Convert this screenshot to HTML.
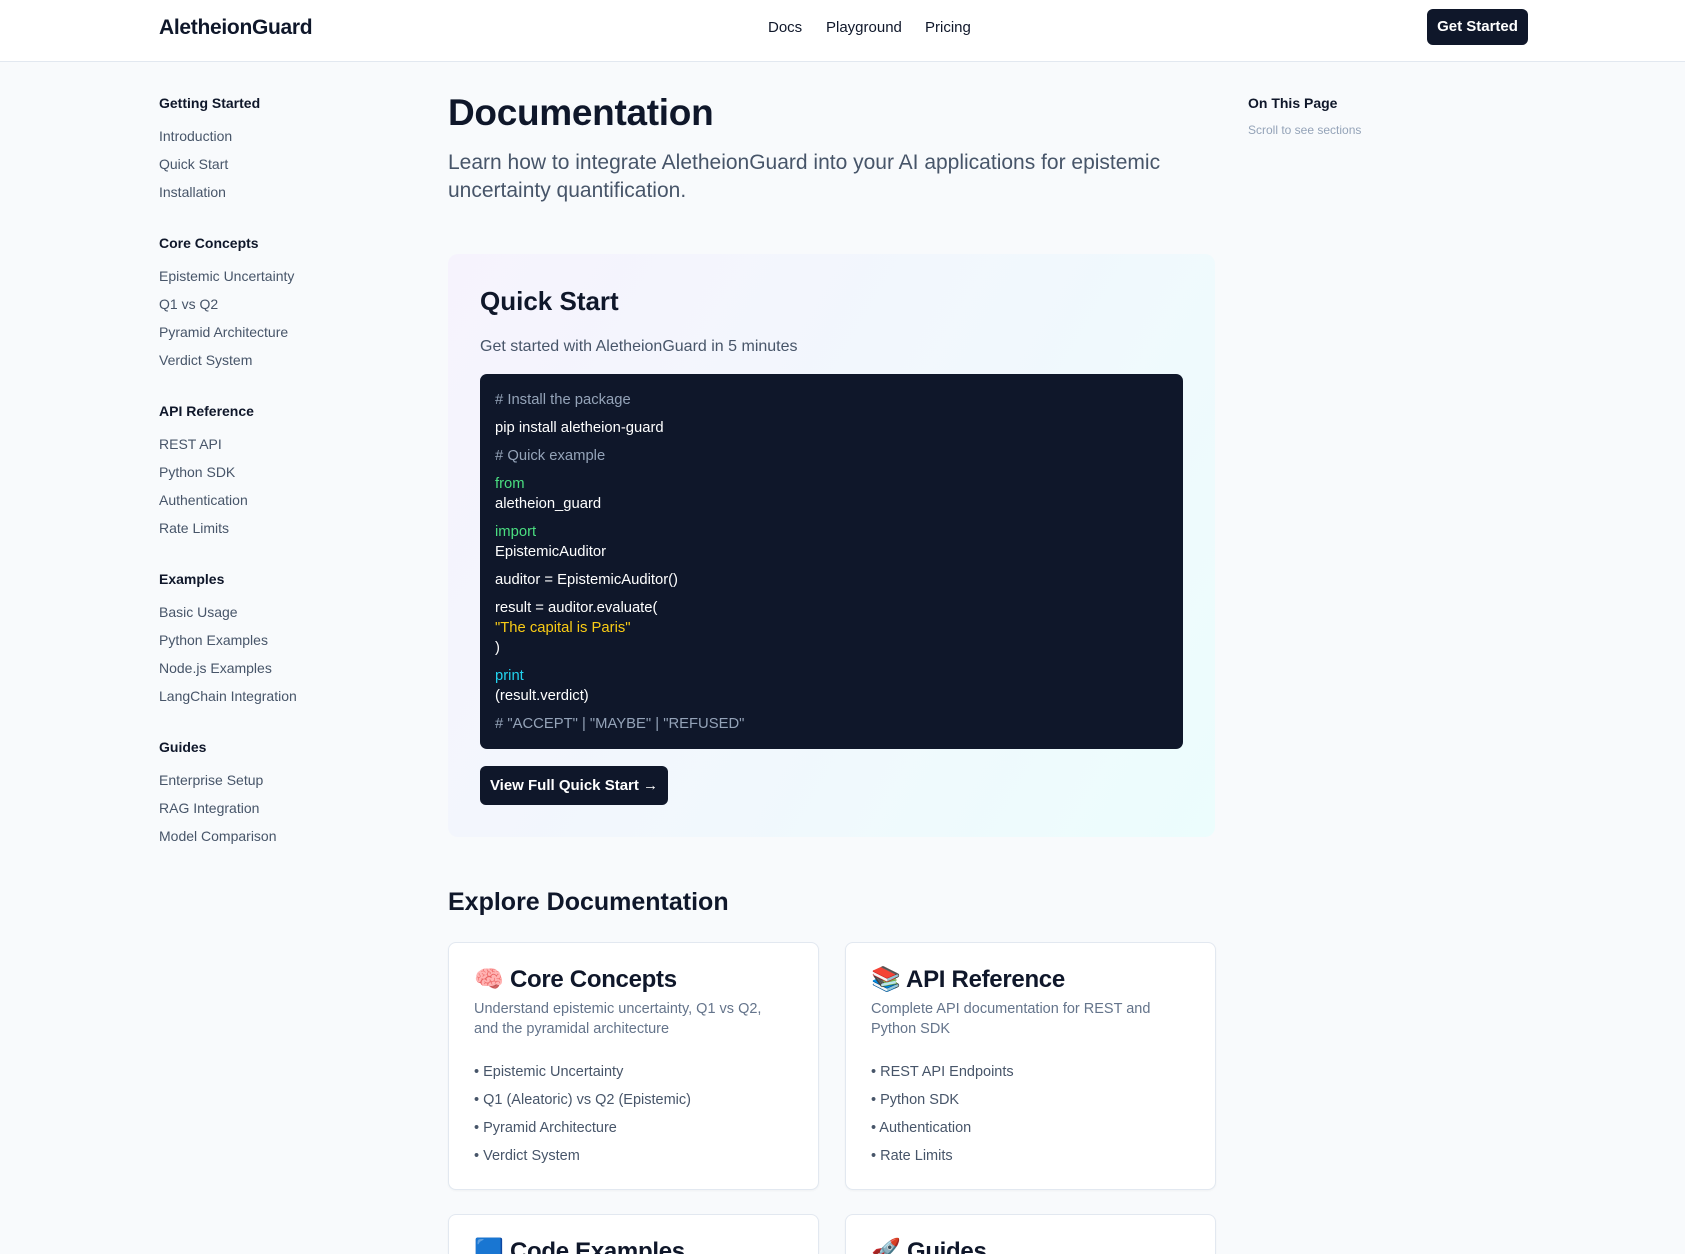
<!DOCTYPE html>
<html><head><meta charset="utf-8"><style>
*{box-sizing:border-box;margin:0;padding:0}
html,body{width:1685px;height:1254px;overflow:hidden}
body{background:#f8fafc;font-family:"Liberation Sans",sans-serif;color:#0f172a;position:relative}
.hdr{position:absolute;left:0;top:0;width:1685px;height:62px;background:#fff;border-bottom:1px solid #e2e8f0}
.logo{position:absolute;left:159px;top:16px;font-size:21px;font-weight:700;letter-spacing:-0.3px}
.nav a{position:absolute;top:19px;font-size:15px;color:#0f172a;text-decoration:none}
.btn{position:absolute;left:1427px;top:9px;width:101px;height:36px;background:#0f172a;color:#fff;border-radius:6px;font-size:15px;font-weight:700;text-align:center;line-height:36px}
.side{position:absolute;left:159px;top:95px;width:200px}
.side h4{font-size:14px;font-weight:700;height:20px;margin-bottom:11px}
.side a{display:block;font-size:14px;color:#475569;height:28px;line-height:20px}
.side .g{margin-bottom:25px}
h1{position:absolute;left:448px;top:92px;font-size:37px;font-weight:700;letter-spacing:-0.3px}
.sub{position:absolute;left:448px;top:149px;width:760px;font-size:21px;line-height:28px;color:#475569}
.qs{position:absolute;left:448px;top:254px;width:767px;height:583px;border-radius:10px;background:linear-gradient(120deg,#f6f3fd,#f1f8fd 55%,#ecfdfd)}
.qs h2{position:absolute;left:32px;top:32px;font-size:26px;font-weight:700}
.qs p{position:absolute;left:32px;top:84px;font-size:16px;color:#475569}
.code{position:absolute;left:32px;top:120px;width:703px;height:375px;background:#0f172a;border-radius:7px;padding:16px 15px;font-size:14.8px;color:#fff}
.code div{line-height:20px;margin-bottom:8px}
.c{color:#94a3b8}.k{color:#4ade80}.s{color:#facc15}.p{color:#22d3ee}
.vb{position:absolute;left:32px;top:512px;width:188px;height:39px;background:#0f172a;color:#fff;border-radius:6px;font-size:15px;font-weight:700;line-height:39px;text-align:center}
.ex{position:absolute;left:448px;top:888px;font-size:25px;font-weight:700}
.card{position:absolute;width:371px;background:#fff;border:1px solid #e2e8f0;border-radius:8px;box-shadow:0 1px 2px rgba(0,0,0,.04);padding:0 40px 0 25px;overflow:hidden}
.card.cut{height:40px;border-bottom:none;border-radius:8px 8px 0 0}
.card h3{margin-top:22px;font-size:24px;font-weight:700;height:30px;line-height:30px;letter-spacing:-0.3px}
.card .d{font-size:14.5px;color:#64748b;line-height:20px;margin-top:4px;height:63px}
.card li{list-style:none;font-size:14.5px;color:#475569;height:28px;line-height:20px}
.toc{position:absolute;left:1248px;top:95px}
.toc h4{font-size:14px;font-weight:700}
.toc span{display:block;margin-top:12px;font-size:12px;color:#94a3b8}
</style></head><body>
<div class="hdr"><div class="logo">AletheionGuard</div>
<div class="nav"><a style="left:768px">Docs</a><a style="left:826px">Playground</a><a style="left:925px">Pricing</a></div>
<div class="btn">Get Started</div></div>
<div class="side">
<div class="g"><h4>Getting Started</h4><a>Introduction</a><a>Quick Start</a><a>Installation</a></div>
<div class="g"><h4>Core Concepts</h4><a>Epistemic Uncertainty</a><a>Q1 vs Q2</a><a>Pyramid Architecture</a><a>Verdict System</a></div>
<div class="g"><h4>API Reference</h4><a>REST API</a><a>Python SDK</a><a>Authentication</a><a>Rate Limits</a></div>
<div class="g"><h4>Examples</h4><a>Basic Usage</a><a>Python Examples</a><a>Node.js Examples</a><a>LangChain Integration</a></div>
<div class="g"><h4>Guides</h4><a>Enterprise Setup</a><a>RAG Integration</a><a>Model Comparison</a></div>
</div>
<h1>Documentation</h1>
<div class="sub">Learn how to integrate AletheionGuard into your AI applications for epistemic uncertainty quantification.</div>
<div class="qs"><h2>Quick Start</h2><p>Get started with AletheionGuard in 5 minutes</p>
<div class="code">
<div class="c"># Install the package</div>
<div>pip install aletheion-guard</div>
<div class="c"># Quick example</div>
<div><span class="k">from</span><br>aletheion_guard</div>
<div><span class="k">import</span><br>EpistemicAuditor</div>
<div>auditor = EpistemicAuditor()</div>
<div>result = auditor.evaluate(<br><span class="s">"The capital is Paris"</span><br>)</div>
<div><span class="p">print</span><br>(result.verdict)</div>
<div class="c"># "ACCEPT" | "MAYBE" | "REFUSED"</div>
</div>
<div class="vb">View Full Quick Start →</div></div>
<div class="ex">Explore Documentation</div>
<div class="card" style="left:448px;top:942px;height:248px"><h3>🧠 Core Concepts</h3><div class="d">Understand epistemic uncertainty, Q1 vs Q2, and the pyramidal architecture</div><ul><li>• Epistemic Uncertainty</li><li>• Q1 (Aleatoric) vs Q2 (Epistemic)</li><li>• Pyramid Architecture</li><li>• Verdict System</li></ul></div>
<div class="card" style="left:845px;top:942px;height:248px"><h3>📚 API Reference</h3><div class="d">Complete API documentation for REST and Python SDK</div><ul><li>• REST API Endpoints</li><li>• Python SDK</li><li>• Authentication</li><li>• Rate Limits</li></ul></div>
<div class="card cut" style="left:448px;top:1214px"><h3>🟦 Code Examples</h3></div>
<div class="card cut" style="left:845px;top:1214px"><h3>🚀 Guides</h3></div>
<div class="toc"><h4>On This Page</h4><span>Scroll to see sections</span></div>
</body></html>
